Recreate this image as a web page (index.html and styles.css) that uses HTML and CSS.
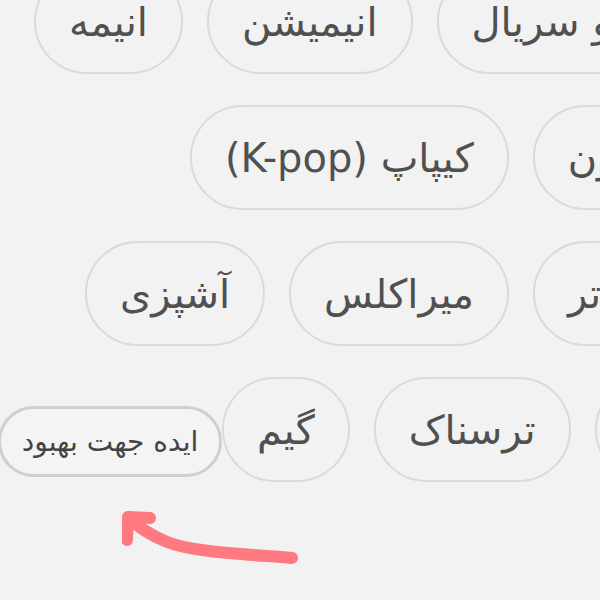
FILE: index.html
```html
<!DOCTYPE html>
<html lang="fa">
<head>
    <meta charset="UTF-8">
    <meta name="viewport" content="width=device-width, initial-scale=1.0">
    <title>Genres</title>
    <link rel="stylesheet" href="styles.css">
</head>
<body>

    <main class="tags">
        <div class="tag-row row-1">
            <span class="tag">انیمه</span>
            <span class="tag">انیمیشن</span>
            <span class="tag">فیلم و سریال</span>
        </div>
        <div class="tag-row row-2">
            <span class="tag">کیپاپ (K-pop)</span>
            <span class="tag">کارتون</span>
        </div>
        <div class="tag-row row-3">
            <span class="tag">آشپزی</span>
            <span class="tag">میراکلس</span>
            <span class="tag">هری پاتر</span>
        </div>
        <div class="tag-row row-4">
            <span class="tag">گیم</span>
            <span class="tag">ترسناک</span>
            <span class="tag">ورزشی</span>
        </div>
    </main>

    <button class="feedback-btn" type="button">ایده جهت بهبود</button>

    <svg class="hint-arrow" width="200" height="70" viewBox="0 0 200 70">
        <path d="M170 48 C 120 44, 70 42, 45 32 C 30 26, 14 16, 7 7" fill="none" stroke="#ff7a80" stroke-width="12" stroke-linecap="round"/>
        <path d="M28 8 L 6 7 L 5 30" fill="none" stroke="#ff7a80" stroke-width="12" stroke-linecap="round" stroke-linejoin="round"/>
    </svg>

</body>
</html>
```

FILE: styles.css
```css
/* Basic Reset */
* {
    margin: 0;
    padding: 0;
    box-sizing: border-box;
}

html, body {
    width: 600px;
    height: 600px;
    overflow: hidden;
    background-color: #f2f2f2;
    font-family: 'DejaVu Sans', 'Noto Sans', sans-serif;
    color: #505050;
}

body {
    position: relative;
}

/* Tag rows */
.tags {
    display: flex;
    flex-direction: column;
    gap: 31px;
    margin-top: -31px;
}

.tag-row {
    display: flex;
    gap: 24px;
    white-space: nowrap;
}

.row-1 { padding-left: 34px; }
.row-2 { padding-left: 190px; }
.row-3 { padding-left: 85px; }
.row-4 { padding-left: 222px; }

.tag {
    flex-shrink: 0;
    display: flex;
    align-items: center;
    justify-content: center;
    height: 105px;
    padding: 0 33px;
    border: 2px solid #dadada;
    border-radius: 53px;
    font-size: 40px;
    line-height: 1.2;
    direction: rtl;
    color: #505050;
}

/* Floating feedback button */
.feedback-btn {
    position: absolute;
    left: -2px;
    top: 406px;
    width: 224px;
    height: 71px;
    border: 3px solid #cfcfcf;
    border-radius: 36px;
    background-color: #f4f4f4;
    font-family: inherit;
    font-size: 28px;
    color: #444;
    direction: rtl;
}

.hint-arrow {
    position: absolute;
    left: 122px;
    top: 510px;
}
```
